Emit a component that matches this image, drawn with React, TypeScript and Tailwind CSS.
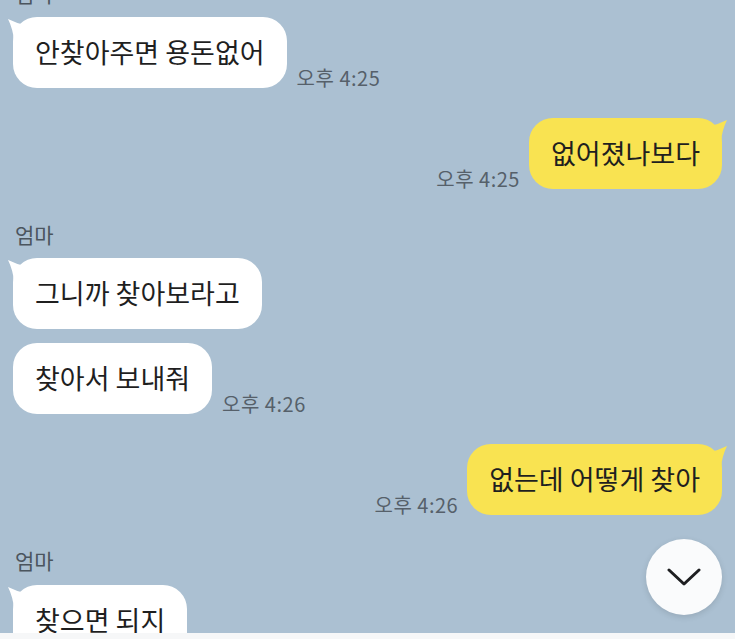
import React from "react";

const font = { fontFamily: '"Noto Sans CJK KR", "Noto Sans", sans-serif' };

function LeftTail() {
  return (
    <svg className="absolute left-[-6px] top-0" width="20" height="24" viewBox="0 0 20 24">
      <path d="M1 2 Q 9 6 18 8 L 18 24 L 7 24 Q 6 12 1 2 Z" fill="#ffffff" />
    </svg>
  );
}

function RightTail() {
  return (
    <svg className="absolute right-[-6px] top-0" width="20" height="24" viewBox="0 0 20 24">
      <path d="M19 2 Q 11 6 2 8 L 2 24 L 13 24 Q 14 12 19 2 Z" fill="#f9e351" />
    </svg>
  );
}

function Time({ t }: { t: string }) {
  return (
    <span className="text-[20px] leading-[22px] text-[#56606a] tracking-[0.5px] whitespace-nowrap mb-[-1px]">
      {t}
    </span>
  );
}

function LeftMsg({ text, tail, time, className = "" }: { text: string; tail?: boolean; time?: string; className?: string }) {
  return (
    <div className={"flex items-end gap-[10px] pl-[13px] " + className}>
      <div className="relative">
        {tail && <LeftTail />}
        <div className="relative h-[71px] flex items-center rounded-[24px] bg-white pl-[22px] pr-[22px] text-[27px] tracking-[0px] text-[#1f1f1f] whitespace-nowrap">
          {text}
        </div>
      </div>
      {time && <Time t={time} />}
    </div>
  );
}

function RightMsg({ text, time, className = "" }: { text: string; time: string; className?: string }) {
  return (
    <div className={"flex items-end justify-end gap-[9px] pr-[13px] " + className}>
      <Time t={time} />
      <div className="relative">
        <RightTail />
        <div className="relative h-[71px] flex items-center rounded-[24px] bg-[#f9e351] pl-[22px] pr-[22px] text-[27px] tracking-[0px] text-[#1f1f1f] whitespace-nowrap">
          {text}
        </div>
      </div>
    </div>
  );
}

function Name({ className = "" }: { className?: string }) {
  return (
    <div className={"pl-[15px] h-[28px] leading-[28px] text-[21px] text-[#4b555e] " + className}>엄마</div>
  );
}

export default function App() {
  return (
    <div style={font} className="relative w-[735px] h-[639px] flex flex-col bg-[#abc0d2] overflow-hidden">
      <div className="flex-1 overflow-hidden">
        <div className="flex flex-col mt-[-21px]">
          <Name />
          <LeftMsg className="mt-[10px]" text="안찾아주면 용돈없어" tail time="오후 4:25" />
          <RightMsg className="mt-[30px]" text="없어졌나보다" time="오후 4:25" />
          <Name className="mt-[31px]" />
          <LeftMsg className="mt-[10px]" text="그니까 찾아보라고" tail />
          <LeftMsg className="mt-[14px]" text="찾아서 보내줘" time="오후 4:26" />
          <RightMsg className="mt-[30px]" text="없는데 어떻게 찾아" time="오후 4:26" />
          <Name className="mt-[31px]" />
          <LeftMsg className="mt-[11px]" text="찾으면 되지" tail />
        </div>
      </div>
      <div className="h-[6px] bg-[#f6f7f8]" />
      <button className="absolute left-[646px] top-[539px] w-[76px] h-[76px] rounded-full bg-[#fafbfc] shadow-[0_2px_6px_rgba(0,0,0,0.12)] flex items-center justify-center">
        <svg width="34" height="20" viewBox="0 0 34 20" fill="none">
          <path d="M2 3 L17 17 L32 3" stroke="#1e1f21" strokeWidth="3" strokeLinecap="round" strokeLinejoin="round" />
        </svg>
      </button>
    </div>
  );
}
